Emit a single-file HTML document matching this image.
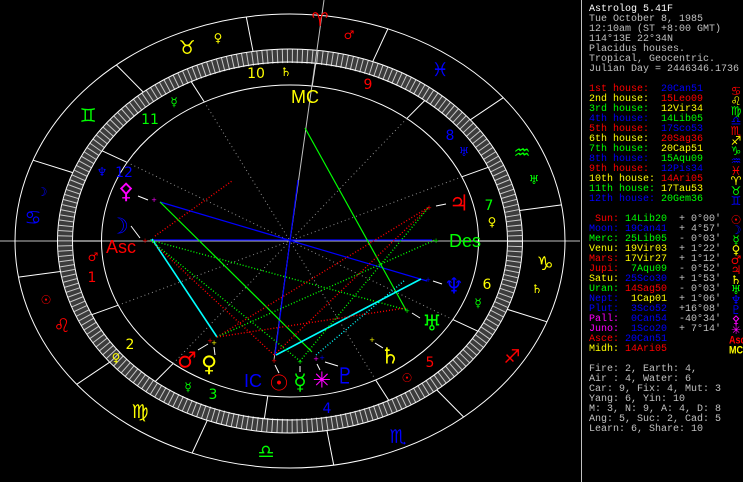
<!DOCTYPE html>
<html><head><meta charset="utf-8">
<style>
html,body{margin:0;padding:0;background:#000;width:743px;height:482px;overflow:hidden}
svg{position:absolute;left:0;top:0}
#p{position:absolute;left:589px;top:5px;font:10px/10px "Liberation Mono",monospace;color:#c0c0c0;white-space:pre}
.r{color:#ff0000}.y{color:#ffff00}.g{color:#00ff00}.b{color:#0000ff}.m{color:#ff00ff}.w{color:#fff}
.s{position:absolute;left:729px;width:14px;text-align:center;font:12px/10px "DejaVu Sans",sans-serif}
.t{font:bold 9px/10px "Liberation Sans Narrow","Liberation Sans",sans-serif;transform:scaleY(1.2)}
</style></head><body>
<svg id="c" width="743" height="482" xmlns="http://www.w3.org/2000/svg" font-family="DejaVu Sans, sans-serif">
<line x1="581.5" y1="0" x2="581.5" y2="482" stroke="#c0c0c0"/>
<line x1="0" y1="241" x2="580" y2="241" stroke="#c0c0c0"/>
<ellipse cx="290" cy="241" rx="225" ry="185" fill="none" stroke="#3c3c3c" stroke-width="14"/>
<ellipse cx="290" cy="241" rx="225" ry="185" fill="none" stroke="#c8c8c8" stroke-width="14" stroke-dasharray="1 4"/>
<g fill="none" stroke="#fff">
<ellipse cx="290" cy="241" rx="275" ry="227"/>
<ellipse cx="290" cy="241" rx="232.5" ry="192"/>
<ellipse cx="290" cy="241" rx="217.5" ry="179"/>
<ellipse cx="290" cy="241" rx="188.5" ry="156"/>
</g>
<g id="gl"></g>
<line x1="324" y1="0" x2="290" y2="241" stroke="#c0c0c0"/>
<line x1="290" y1="241" x2="274" y2="360" stroke="#c0c0c0"/>
<g stroke-width="1.2">
<line x1="160" y1="202" x2="427" y2="281" stroke="#0000ff"/>
<line x1="150" y1="240" x2="432" y2="240" stroke="#0000ff"/>
<line x1="298" y1="180" x2="275" y2="355" stroke="#0000ff"/>
<line x1="160" y1="202" x2="312" y2="352" stroke="#00ff00"/>
<line x1="305" y1="128" x2="406" y2="310" stroke="#00ff00"/>
<line x1="152" y1="239" x2="217" y2="337" stroke="#00ffff" stroke-width="1.6"/>
<line x1="276" y1="355" x2="421" y2="279" stroke="#00ffff" stroke-width="1.6"/>
</g>
<g stroke-width="1.4" stroke-dasharray="1 2">
<line x1="155" y1="236" x2="232" y2="181" stroke="#ff0000"/>
<line x1="150" y1="240" x2="274" y2="355" stroke="#ff0000"/>
<line x1="150" y1="240" x2="407" y2="310" stroke="#00ff00"/>
<line x1="217" y1="337" x2="429" y2="207" stroke="#ff0000"/>
<line x1="217" y1="337" x2="435" y2="240" stroke="#00ff00"/>
<line x1="217" y1="337" x2="405" y2="308" stroke="#ff0000"/>
<line x1="274" y1="355" x2="429" y2="207" stroke="#ff0000"/>
<line x1="300" y1="361" x2="429" y2="207" stroke="#00ff00"/>
<line x1="316" y1="355" x2="405" y2="280" stroke="#00ffff"/>
<line x1="150" y1="240" x2="300" y2="361" stroke="#00ff00"/>
</g>
<g font-size="7" text-anchor="middle">
<text x="154" y="202" fill="#f0f">+</text><text x="145" y="243" fill="#f00">+</text>
<text x="436" y="243" fill="#0f0">+</text><text x="429" y="210" fill="#f00">+</text>
<text x="428" y="282" fill="#00f">+</text><text x="407" y="313" fill="#0f0">+</text>
<text x="372" y="342" fill="#ff0">+</text><text x="210" y="343" fill="#f00">+</text>
<text x="214" y="345" fill="#ff0">+</text><text x="274" y="363" fill="#f00">+</text>
<text x="300" y="364" fill="#0f0">+</text><text x="316" y="361" fill="#f0f">+</text>
<text x="322" y="360" fill="#00f">+</text>
</g>
<g font-size="19" text-anchor="middle" dominant-baseline="central">
<text x="320" y="20" fill="#f00">♈</text><text x="187" y="48" fill="#ff0">♉</text>
<text x="88" y="116" fill="#0f0">♊</text><text x="33" y="218" fill="#00f">♋</text>
<text x="62" y="326" fill="#f00">♌</text><text x="140" y="412" fill="#ff0">♍</text>
<text x="266" y="452" fill="#0f0">♎</text><text x="398" y="437" fill="#00f">♏</text>
<text x="512" y="357" fill="#f00">♐</text><text x="545" y="264" fill="#ff0">♑</text>
<text x="522" y="153" fill="#0f0">♒</text><text x="440" y="70" fill="#00f">♓</text>
</g>
<g font-size="12" text-anchor="middle" dominant-baseline="central">
<text x="218" y="38" fill="#ff0">♀</text><text x="349" y="35" fill="#f00">♂</text>
<text x="42" y="192" fill="#00f">☽</text><text x="46" y="300" fill="#f00">☉</text>
<text x="116" y="358" fill="#ff0">♀</text><text x="174" y="102" fill="#0f0">☿</text>
<text x="534" y="180" fill="#0f0">♅</text><text x="537" y="289" fill="#ff0">♄</text>
<text x="102" y="172" fill="#00f">♆</text><text x="93" y="257" fill="#f00">♂</text>
<text x="286" y="72" fill="#ff0">♄</text><text x="464" y="152" fill="#00f">♅</text>
<text x="492" y="222" fill="#ff0">♀</text><text x="478" y="303" fill="#0f0">☿</text>
<text x="407" y="378" fill="#f00">☉</text><text x="188" y="387" fill="#0f0">☿</text>
</g>
<g font-size="14" text-anchor="middle" dominant-baseline="central">
<text x="256" y="74" fill="#ff0">10</text><text x="368" y="85" fill="#f00">9</text>
<text x="150" y="120" fill="#0f0">11</text><text x="124" y="173" fill="#00f">12</text>
<text x="92" y="278" fill="#f00">1</text><text x="130" y="345" fill="#ff0">2</text>
<text x="213" y="395" fill="#0f0">3</text><text x="327" y="409" fill="#00f">4</text>
<text x="430" y="363" fill="#f00">5</text><text x="487" y="285" fill="#ff0">6</text>
<text x="489" y="206" fill="#0f0">7</text><text x="450" y="136" fill="#00f">8</text>
</g>
<g font-family="Liberation Sans Narrow, Liberation Sans, sans-serif" font-size="18" text-anchor="middle" dominant-baseline="central">
<text x="305" y="97" fill="#ff0">MC</text><text x="121" y="247" fill="#f00">Asc</text>
<text x="465" y="241" fill="#0f0">Des</text><text x="253" y="381" fill="#00f">IC</text>
</g>
<g font-size="22" text-anchor="middle" dominant-baseline="central">
<text x="126" y="192" fill="#f0f">⚴</text><text x="119" y="227" fill="#00f">☽</text>
<text x="459" y="204" fill="#f00">♃</text><text x="454" y="287" fill="#00f">♆</text>
<text x="432" y="324" fill="#0f0">♅</text><text x="390" y="357" fill="#ff0">♄</text>
<text x="187" y="361" fill="#f00">♂</text><text x="209" y="365" fill="#ff0">♀</text>
<text x="279" y="384" fill="#f00">☉</text><text x="300" y="383" fill="#0f0">☿</text>
<text x="322" y="381" fill="#f0f">✳</text><text x="345" y="377" fill="#00f">♇</text>
</g>
<g stroke="#fff">
<line x1="138" y1="196" x2="148" y2="200"/><line x1="131" y1="226" x2="140" y2="238"/>
<line x1="446" y1="204" x2="436" y2="206"/><line x1="442" y1="284" x2="433" y2="281"/>
<line x1="420" y1="318" x2="412" y2="313"/><line x1="383" y1="348" x2="375" y2="343"/>
<line x1="198" y1="350" x2="208" y2="344"/><line x1="215" y1="355" x2="214" y2="347"/>
<line x1="279" y1="373" x2="275" y2="365"/><line x1="300" y1="372" x2="300" y2="366"/>
<line x1="320" y1="370" x2="317" y2="364"/><line x1="338" y1="366" x2="325" y2="362"/>
</g>
</svg>
<div id="p"><span class="w">Astrolog 5.41F</span>
Tue October 8, 1985
12:10am (ST +8:00 GMT)
114°13E 22°34N
Placidus houses.
Tropical, Geocentric.
Julian Day = 2446346.1736

<span class="r">1st house:</span>  <span class="b">20Can51</span>
<span class="y">2nd house:</span>  <span class="r">15Leo09</span>
<span class="g">3rd house:</span>  <span class="y">12Vir34</span>
<span class="b">4th house:</span>  <span class="g">14Lib05</span>
<span class="r">5th house:</span>  <span class="b">17Sco53</span>
<span class="y">6th house:</span>  <span class="r">20Sag36</span>
<span class="g">7th house:</span>  <span class="y">20Cap51</span>
<span class="b">8th house:</span>  <span class="g">15Aqu09</span>
<span class="r">9th house:</span>  <span class="b">12Pis34</span>
<span class="y">10th house:</span> <span class="r">14Ari05</span>
<span class="g">11th house:</span> <span class="y">17Tau53</span>
<span class="b">12th house:</span> <span class="g">20Gem36</span>

<span class="r"> Sun:</span> <span class="g">14Lib20</span>  + 0°00'
<span class="b">Moon:</span> <span class="b">19Can41</span>  + 4°57'
<span class="g">Merc:</span> <span class="g">25Lib05</span>  - 0°03'
<span class="y">Venu:</span> <span class="y">19Vir03</span>  + 1°22'
<span class="r">Mars:</span> <span class="y">17Vir27</span>  + 1°12'
<span class="r">Jupi:</span>  <span class="g">7Aqu09</span>  - 0°52'
<span class="y">Satu:</span> <span class="b">25Sco30</span>  + 1°53'
<span class="g">Uran:</span> <span class="r">14Sag50</span>  - 0°03'
<span class="b">Nept:</span>  <span class="y">1Cap01</span>  + 1°06'
<span class="b">Plut:</span>  <span class="b">3Sco52</span>  +16°08'
<span class="m">Pall:</span>  <span class="b">0Can54</span>  -40°34'
<span class="m">Juno:</span>  <span class="b">1Sco20</span>  + 7°14'
<span class="r">Asce:</span> <span class="b">20Can51</span>
<span class="y">Midh:</span> <span class="r">14Ari05</span>

Fire: 2, Earth: 4,
Air : 4, Water: 6
Car: 9, Fix: 4, Mut: 3
Yang: 6, Yin: 10
M: 3, N: 9, A: 4, D: 8
Ang: 5, Suc: 2, Cad: 5
Learn: 6, Share: 10</div>
<div class="s" style="top:86px;color:#f00">♋</div>
<div class="s" style="top:96px;color:#ff0">♌</div>
<div class="s" style="top:106px;color:#0f0">♍</div>
<div class="s" style="top:116px;color:#00f">♎</div>
<div class="s" style="top:126px;color:#f00">♏</div>
<div class="s" style="top:136px;color:#ff0">♐</div>
<div class="s" style="top:146px;color:#0f0">♑</div>
<div class="s" style="top:156px;color:#00f">♒</div>
<div class="s" style="top:166px;color:#f00">♓</div>
<div class="s" style="top:176px;color:#ff0">♈</div>
<div class="s" style="top:186px;color:#0f0">♉</div>
<div class="s" style="top:196px;color:#00f">♊</div>
<div class="s" style="top:215px;color:#f00">☉</div>
<div class="s" style="top:225px;color:#00f">☽</div>
<div class="s" style="top:235px;color:#0f0">☿</div>
<div class="s" style="top:245px;color:#ff0">♀</div>
<div class="s" style="top:255px;color:#f00">♂</div>
<div class="s" style="top:265px;color:#f00">♃</div>
<div class="s" style="top:275px;color:#ff0">♄</div>
<div class="s" style="top:285px;color:#0f0">♅</div>
<div class="s" style="top:295px;color:#00f">♆</div>
<div class="s" style="top:305px;color:#00f">♇</div>
<div class="s" style="top:315px;color:#f0f">⚴</div>
<div class="s" style="top:325px;color:#f0f">✳</div>
<div class="s t" style="top:335px;color:#f00">Asc</div>
<div class="s t" style="top:345px;color:#ff0">MC</div>
<script>
(function(){
var g=document.getElementById('gl'),ns='http://www.w3.org/2000/svg',cx=290,cy=241,asc=110.85;
function pt(rx,ry,l){var t=(180+l-asc)*Math.PI/180;return [cx+rx*Math.cos(t),cy-ry*Math.sin(t)];}
function ln(a,b,st,da){var e=document.createElementNS(ns,'line');e.setAttribute('x1',a[0]);e.setAttribute('y1',a[1]);e.setAttribute('x2',b[0]);e.setAttribute('y2',b[1]);e.setAttribute('stroke',st);if(da)e.setAttribute('stroke-dasharray',da);g.appendChild(e);}
for(var i=0;i<12;i++){var l=i*30;ln(pt(275,227,l),pt(232.5,192,l),'#fff');}
var h=[110.85,135.15,162.57,194.08,227.88,260.6,290.85,315.15,342.57,14.08,47.88,80.6];
for(var i=0;i<12;i++){ln(pt(217.5,179,h[i]),pt(188.5,156,h[i]),'#fff');if(i%3)ln(pt(188.5,156,h[i]),[cx,cy],'#909090','1 3');}
})();
</script>
</body></html>
